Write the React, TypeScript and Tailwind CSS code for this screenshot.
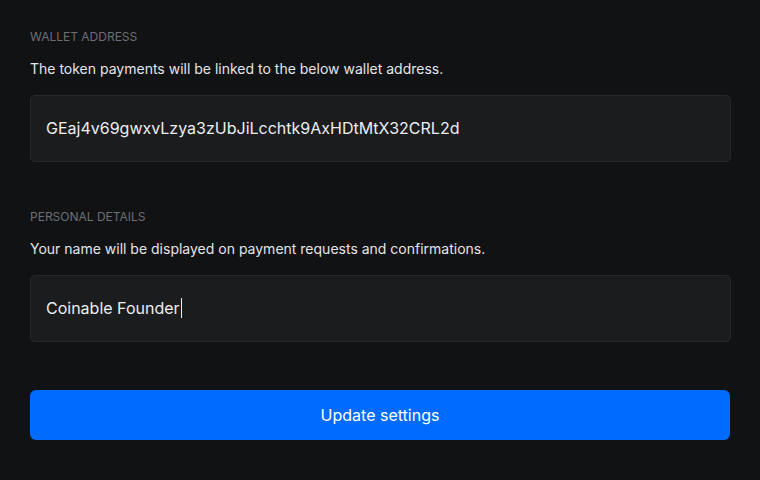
import React from 'react';

const Field: React.FC<{ label: string; hint: string; value: string; caret?: boolean }> = ({
  label,
  hint,
  value,
  caret,
}) => (
  <div>
    <div className="text-[12px] leading-4 uppercase text-[#6c6f75]">{label}</div>
    <p className="mt-[14px] text-[14px] leading-5 text-[#e4e5e7]">{hint}</p>
    <div className="mt-4 -mr-px h-[67px] rounded-[5px] border border-[#27282b] bg-[#1b1c1e] px-[15px] pb-[2px] flex items-center">
      <span className="text-[16px] text-[#eceef0]">{value}</span>
      {caret && <span className="ml-[1px] inline-block w-px h-[20px] bg-[#f0f0f0]" />}
    </div>
  </div>
);

const App: React.FC = () => {
  return (
    <div
      className="w-[760px] h-[480px] bg-[#111214] px-[30px] pt-[29px]"
      style={{ fontFamily: 'Inter, "Noto Sans", sans-serif' }}
    >
      <Field
        label="Wallet Address"
        hint="The token payments will be linked to the below wallet address."
        value="GEaj4v69gwxvLzya3zUbJiLcchtk9AxHDtMtX32CRL2d"
      />
      <div className="mt-[47px]">
        <Field
          label="Personal Details"
          hint="Your name will be displayed on payment requests and confirmations."
          value="Coinable Founder"
          caret
        />
      </div>
      <button className="mt-[48px] w-full h-[50px] rounded-[6px] bg-[#006bff] text-white text-[16px]">
        Update settings
      </button>
    </div>
  );
};

export default App;
